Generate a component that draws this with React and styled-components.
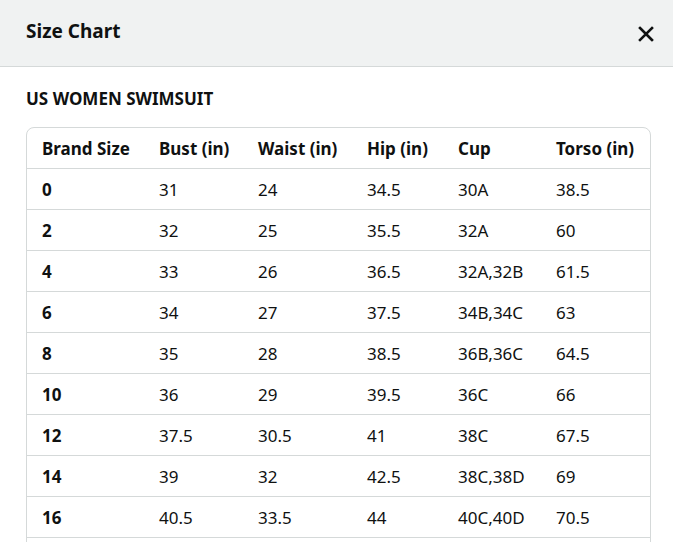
import React from "react";
import styled, { createGlobalStyle } from "styled-components";

const GlobalStyle = createGlobalStyle`
  body {
    margin: 0;
    font-family: "Noto Sans", "Liberation Sans", sans-serif;
    color: #0f1111;
    background: #ffffff;
    overflow: hidden;
  }
`;

const columns = [
  { label: "Brand Size", width: 117 },
  { label: "Bust (in)", width: 99 },
  { label: "Waist (in)", width: 109 },
  { label: "Hip (in)", width: 91 },
  { label: "Cup", width: 98 },
  { label: "Torso (in)", width: 109 },
];

const rows = [
  ["0", "31", "24", "34.5", "30A", "38.5"],
  ["2", "32", "25", "35.5", "32A", "60"],
  ["4", "33", "26", "36.5", "32A,32B", "61.5"],
  ["6", "34", "27", "37.5", "34B,34C", "63"],
  ["8", "35", "28", "38.5", "36B,36C", "64.5"],
  ["10", "36", "29", "39.5", "36C", "66"],
  ["12", "37.5", "30.5", "41", "38C", "67.5"],
  ["14", "39", "32", "42.5", "38C,38D", "69"],
  ["16", "40.5", "33.5", "44", "40C,40D", "70.5"],
  ["18", "42", "35", "45.5", "40D,42D", "72"],
];

function CloseIcon() {
  return (
    <svg width="16" height="16" viewBox="0 0 16 16">
      <path d="M2 2 L14 14 M14 2 L2 14" stroke="#0f1111" strokeWidth="2.6" strokeLinecap="square" fill="none" />
    </svg>
  );
}

export default function App() {
  return (
    <Modal>
      <GlobalStyle />
      <Header>
        <Title>Size Chart</Title>
        <CloseButton aria-label="Close">
          <CloseIcon />
        </CloseButton>
      </Header>
      <Body>
        <SectionTitle>US WOMEN SWIMSUIT</SectionTitle>
        <TableWrap>
          <Table>
            <colgroup>
              {columns.map((c) => (
                <col key={c.label} style={{ width: c.width }} />
              ))}
            </colgroup>
            <thead>
              <tr>
                {columns.map((c) => (
                  <HeadCell key={c.label}>{c.label}</HeadCell>
                ))}
              </tr>
            </thead>
            <tbody>
              {rows.map((r) => (
                <tr key={r[0]}>
                  {r.map((v, i) => (
                    <Cell key={i} $bold={i === 0}>
                      {v}
                    </Cell>
                  ))}
                </tr>
              ))}
            </tbody>
          </Table>
        </TableWrap>
      </Body>
    </Modal>
  );
}

const Modal = styled.div`
  width: 673px;
  height: 542px;
  overflow: hidden;
  background: #ffffff;
`;

const Header = styled.div`
  height: 67px;
  box-sizing: border-box;
  background: #f0f2f2;
  border-bottom: 1px solid #d5d9d9;
  display: flex;
  align-items: center;
  justify-content: space-between;
  padding: 0 19px 0 26px;
`;

const Title = styled.div`
  font-size: 19px;
  font-weight: 700;
  line-height: 24px;
  margin-top: -5px;
`;

const CloseButton = styled.button`
  border: none;
  background: transparent;
  padding: 0;
  display: flex;
  margin-top: 1px;
  cursor: pointer;
`;

const Body = styled.div`
  padding: 21px 24px 0 26px;
`;

const SectionTitle = styled.div`
  font-size: 17px;
  font-weight: 700;
  line-height: 22px;
  margin-bottom: 17px;
`;

const TableWrap = styled.div`
  border: 1px solid #d5d9d9;
  border-radius: 8px;
  overflow: hidden;
  width: 623px;
`;

const Table = styled.table`
  width: 100%;
  border-collapse: collapse;
  table-layout: fixed;
`;

const HeadCell = styled.th`
  text-align: left;
  font-size: 17px;
  font-weight: 700;
  height: 40px;
  padding: 0 0 0 15px;
  white-space: nowrap;
`;

const Cell = styled.td`
  font-size: 17px;
  font-weight: ${(p) => (p.$bold ? 700 : 400)};
  height: 40px;
  padding: 0 0 0 15px;
  border-top: 1px solid #d5d9d9;
  white-space: nowrap;
`;
